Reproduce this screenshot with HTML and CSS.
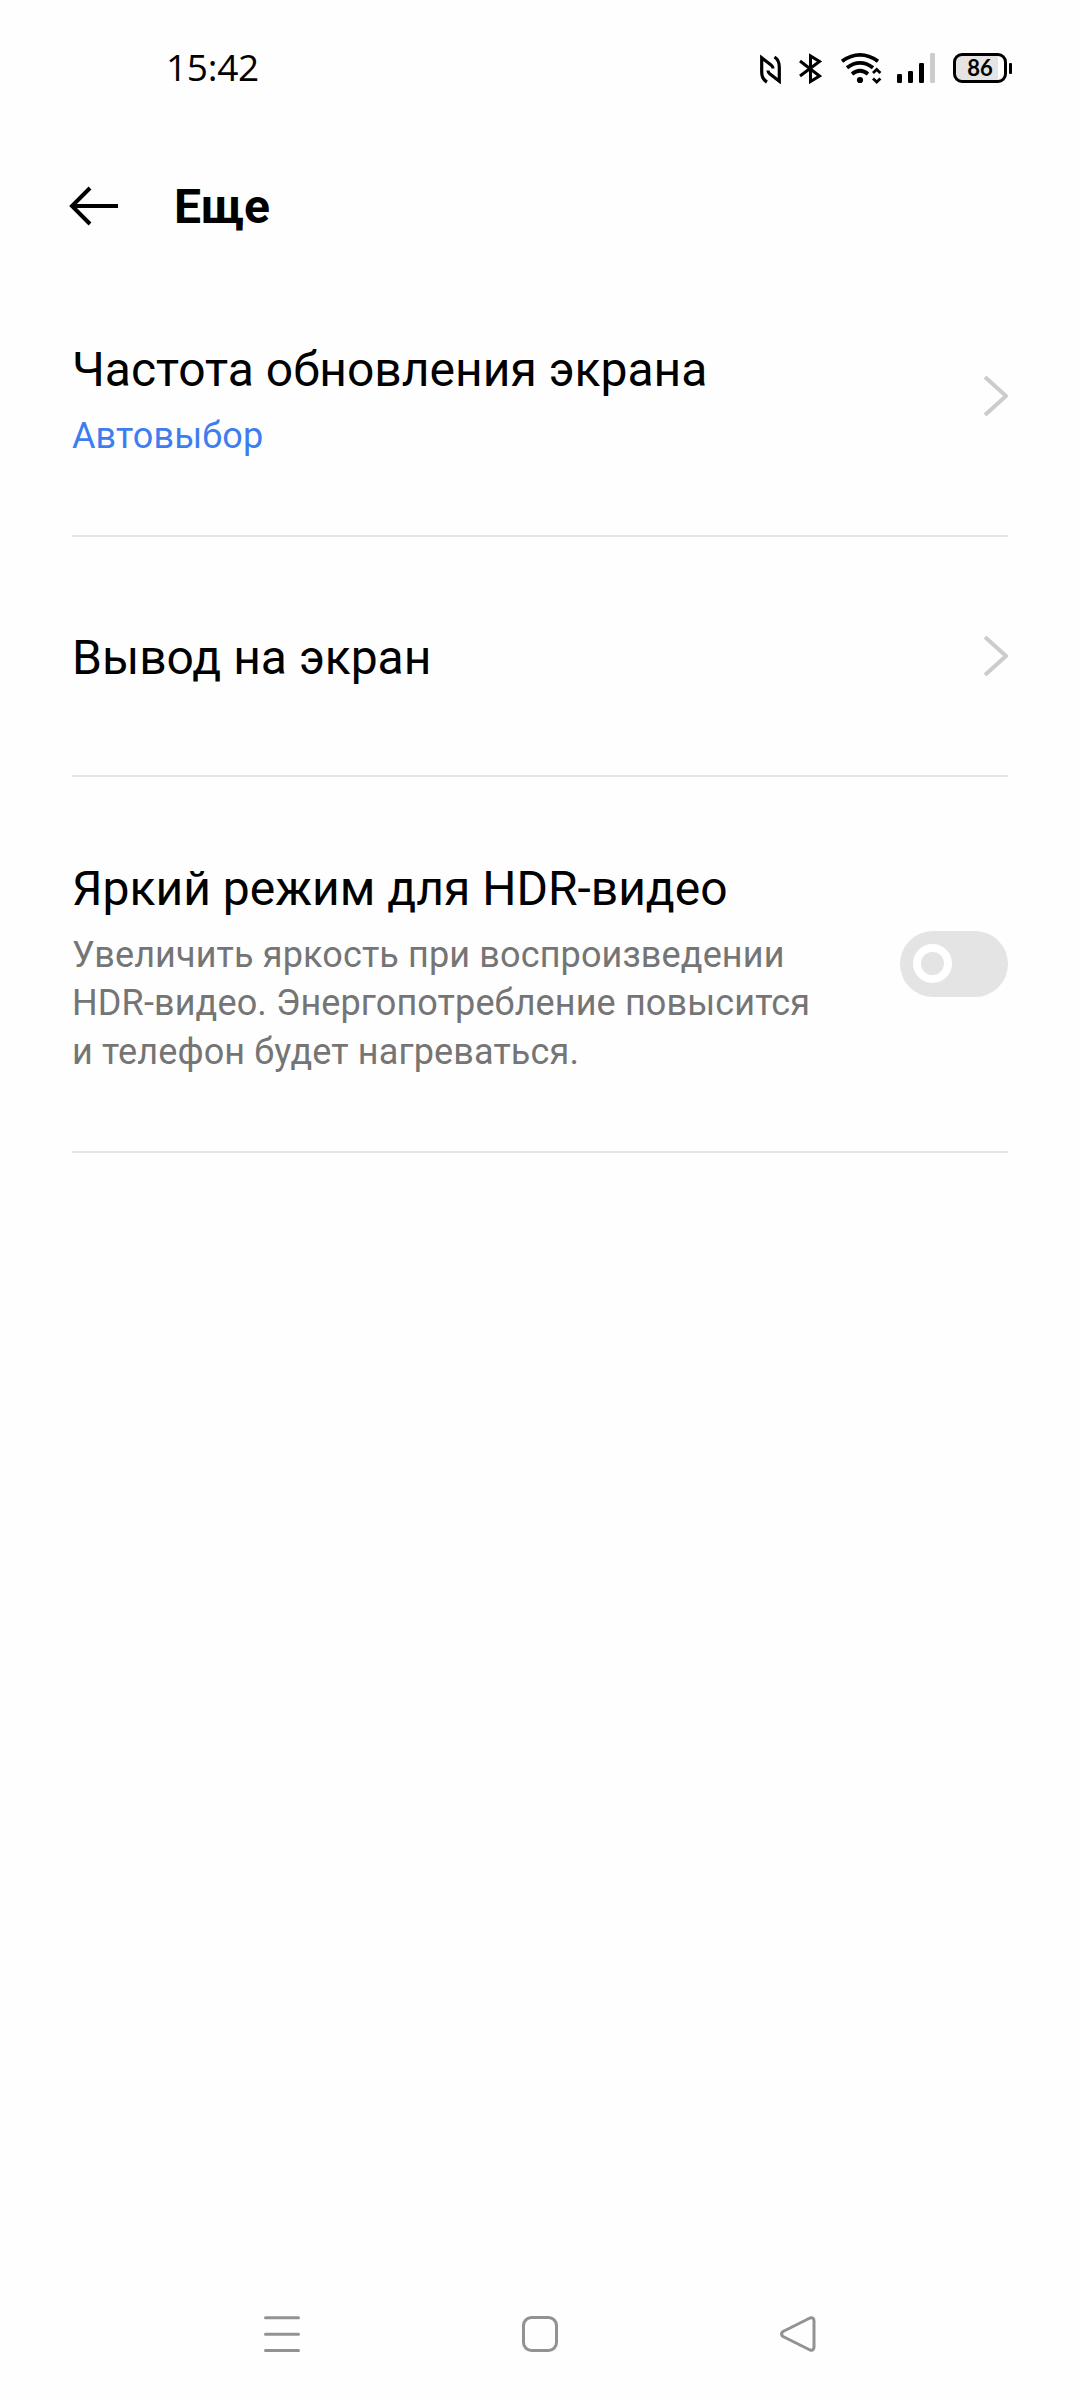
FILE: index.html
```html
<!DOCTYPE html>
<html lang="ru">
<head>
<meta charset="utf-8">
<title>Еще</title>
<link rel="stylesheet" href="styles.css">
</head>
<body>
<header class="status">
  <span class="clock">15:42</span>
  <div class="indicators">
    <svg class="nfc" width="24" height="32" viewBox="759 52 24 32"><path d="M767 82Q761.700 79 761.700 72V57.800L771 65Q773 66.500 773 68.500M774.500 57Q779.300 60 779.300 67V81.200L770 74Q768 72.500 768 70.500" fill="none" stroke="#000" stroke-width="3.200"/></svg>
    <svg class="bt" width="24" height="32" viewBox="798 52 24 32"><path d="M800 61L819.500 76L810.500 81.500V56L819.500 61.500L800 76" fill="none" stroke="#000" stroke-width="3"/></svg>
    <svg class="wifi" width="42" height="32" viewBox="840 52 42 32"><g fill="none" stroke="#000" stroke-width="3.800"><path d="M842 61.200Q860 48.500 878 61.200"/><path d="M847 67.800Q860 58 873 67.800"/><path d="M852 74Q860 67.500 868 74"/><path d="M873 73L876.700 69.500L880.400 73M873 78.500L876.700 82L880.400 78.500" stroke-width="2.800"/></g><circle cx="860" cy="80" r="3.100"/></svg>
    <svg class="signal" width="40" height="32" viewBox="896 52 40 32"><rect x="897" y="74" width="5" height="9" rx="1.200"/><rect x="908" y="71" width="5" height="12" rx="1.200"/><rect x="919" y="63" width="5" height="20" rx="1.200"/><rect x="930" y="53" width="5" height="30" rx="1.200" fill="#ccc"/></svg>
    <div class="battery"><span class="level">86</span></div>
  </div>
</header>

<div class="toolbar">
  <svg width="50" height="40" viewBox="69 186 50 40"><path d="M90 188L72 206L90 224M71.500 206H118" fill="none" stroke="#000" stroke-width="4"/></svg>
  <h1 class="heading">Еще</h1>
</div>

<main class="list">
  <section class="row row-refresh">
    <div class="text">
      <h2 class="title">Частота обновления экрана</h2>
      <p class="note value">Автовыбор</p>
    </div>
    <svg class="chevron" width="26" height="42" viewBox="0 0 26 42"><path d="M3 2L24 21L3 40" fill="none" stroke="#ccc" stroke-width="4" stroke-linejoin="round"/></svg>
  </section>
  <section class="row row-output">
    <h2 class="title">Вывод на экран</h2>
    <svg class="chevron" width="26" height="42" viewBox="0 0 26 42"><path d="M3 2L24 21L3 40" fill="none" stroke="#ccc" stroke-width="4" stroke-linejoin="round"/></svg>
  </section>
  <section class="row row-hdr">
    <div class="text">
      <h2 class="title">Яркий режим для HDR-видео</h2>
      <p class="note">Увеличить яркость при воспроизведении<br>HDR-видео. Энергопотребление повысится<br>и телефон будет нагреваться.</p>
    </div>
    <div class="switch"><span class="thumb"></span></div>
  </section>
</main>

<nav class="navbar">
  <svg width="38" height="38" viewBox="0 0 38 38"><path d="M2.500 2.700H35.500M2.500 19.200H35.500M2.500 35.500H35.500" stroke="#929292" stroke-width="3" stroke-linecap="round"/></svg>
  <svg width="38" height="38" viewBox="0 0 38 38"><rect x="2.500" y="2.500" width="33" height="33" rx="8" fill="none" stroke="#929292" stroke-width="3"/></svg>
  <svg width="38" height="38" viewBox="0 0 38 38"><path d="M31 3L4 16.500Q1 19 4 21.500L31 35Q35 36 35 32V6Q35 2 31 3Z" fill="none" stroke="#929292" stroke-width="3" stroke-linejoin="round"/></svg>
</nav>
</body>
</html>
```
FILE: styles.css
```css
* { box-sizing: border-box; }

body {
  margin: 0;
  width: 1080px;
  height: 2400px;
  display: flex;
  flex-direction: column;
  background: #fefefe;
  color: #000;
  font-family: Roboto, sans-serif;
}

svg { display: block; flex: none; }
h1, h2, p { margin: 0; }

.status {
  display: flex;
  justify-content: space-between;
  align-items: center;
  height: 136px;
  padding: 0 68px 0 166px;
}
.clock {
  padding-bottom: 2px;
  font-family: "Open Sans", sans-serif;
  font-size: 37px;
  line-height: 44px;
  letter-spacing: -0.3px;
}
.indicators { display: flex; align-items: center; }
.bt { margin-left: 15px; }
.wifi { margin-left: 18px; }
.signal { margin-left: 14px; }

.battery {
  display: flex;
  align-items: center;
  margin-left: 17px;
}
.battery::after {
  content: "";
  width: 3px;
  height: 11px;
  margin-left: 2px;
  border-radius: 1px;
  background: #000;
}
.level {
  width: 54px;
  height: 30px;
  border: 3px solid #000;
  border-radius: 9px;
  background: linear-gradient(90deg, #e4e4e4 42px, #fefefe 42px);
  font: 700 22px/23px Lato, sans-serif;
  text-align: center;
}

.toolbar {
  display: flex;
  align-items: center;
  gap: 55px;
  height: 140px;
  padding-left: 69px;
}
.heading {
  padding-top: 2px;
  font-size: 48px;
  line-height: 56px;
  font-weight: 700;
}

.list { padding: 0 72px; }
.row {
  display: flex;
  justify-content: space-between;
  border-bottom: 2px solid #e4e4e4;
}
.row-refresh { height: 261px; padding-top: 66px; }
.row-output { height: 240px; padding-top: 93px; }
.row-hdr { height: 376px; padding-top: 84px; }

.title {
  font-size: 48px;
  line-height: 56px;
  font-weight: 400;
  white-space: nowrap;
}
.note {
  margin-top: 14px;
  color: #757575;
  font-size: 36px;
  line-height: 48.4px;
  letter-spacing: 0.13px;
  white-space: nowrap;
}
.value { color: #3e7df0; }

.row-refresh .chevron { margin-top: 33px; }
.row-output .chevron { margin-top: 5px; }

.switch {
  width: 108px;
  height: 66px;
  margin-top: 70px;
  padding: 13px;
  border-radius: 33px;
  background: #e4e4e4;
}
.thumb {
  display: block;
  width: 39px;
  height: 39px;
  border: 8px solid #fff;
  border-radius: 50%;
}

.navbar {
  display: flex;
  justify-content: space-between;
  margin-top: auto;
  padding: 0 263px 47px;
}
```
